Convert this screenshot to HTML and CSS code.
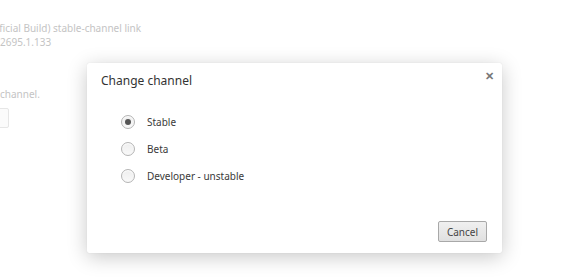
FILE: index.html
```html
<!DOCTYPE html>
<html lang="en">
  <head>
    <meta charset="UTF-8" />
    <title>Change channel</title>
    <link rel="stylesheet" href="styles.css">
  </head>
  <body>
    <div class="page">
      <p class="line line-first">(Official Build) stable-channel link</p>
      <p class="line line-second">2695.1.133</p>
      <p class="line line-channel">channel.</p>
      <div class="page-button"></div>
    </div>

    <div class="dialog">
      <div class="dialog-head">
        <h1>Change channel</h1>
        <span class="close">&#x2715;</span>
      </div>
      <div class="options">
        <label class="option">
          <span class="radio checked"></span>
          <span>Stable</span>
        </label>
        <label class="option">
          <span class="radio"></span>
          <span>Beta</span>
        </label>
        <label class="option">
          <span class="radio"></span>
          <span>Developer - unstable</span>
        </label>
      </div>
      <div class="dialog-foot">
        <button class="btn">Cancel</button>
      </div>
    </div>
  </body>
</html>
```

FILE: styles.css
```css
* {
  margin: 0;
  padding: 0;
  box-sizing: border-box;
}
body {
  font-family: "Noto Sans", "Open Sans", sans-serif;
  background: #fff;
  color: #333;
  width: 580px;
  height: 279px;
  overflow: hidden;
  position: relative;
}
.page {
  padding-top: 21px;
  color: #c4c4c4;
  font-size: 10px;
}
.line {
  line-height: 14px;
}
.line-first {
  margin-left: -15px;
}
.line-channel {
  margin-top: 38px;
}
.page-button {
  margin-top: 7px;
  margin-left: -30px;
  width: 39px;
  height: 20px;
  border: 1px solid #e6e6e6;
  border-radius: 2px;
  background: #fbfbfb;
}
.dialog {
  position: absolute;
  left: 87px;
  top: 63px;
  width: 415px;
  height: 190px;
  background: #fff;
  border-radius: 2px;
  box-shadow: 0 4px 20px rgba(0, 0, 0, 0.22), 0 0 1px rgba(0, 0, 0, 0.15);
  display: flex;
  flex-direction: column;
}
.dialog-head {
  display: flex;
  justify-content: space-between;
  padding: 9px 8px 0 14px;
}
.dialog-head h1 {
  font-size: 12px;
  font-weight: normal;
  color: #333;
  line-height: 18px;
}
.close {
  font-size: 11px;
  font-weight: bold;
  color: #777;
  line-height: 11px;
  margin-top: -2px;
}
.options {
  display: flex;
  flex-direction: column;
  gap: 13px;
  padding: 25px 0 0 34px;
  font-size: 10px;
  color: #3a3a3a;
}
.option {
  display: flex;
  align-items: center;
  gap: 12px;
  line-height: 14px;
}
.radio {
  width: 14px;
  height: 14px;
  border-radius: 50%;
  border: 1px solid #b4b4b4;
  background: linear-gradient(#eeeeee, #f9f9f9);
  box-shadow: inset 0 1px 1px #fff;
  position: relative;
}
.radio.checked::after {
  content: "";
  position: absolute;
  left: 3px;
  top: 3px;
  width: 6px;
  height: 6px;
  border-radius: 50%;
  background: #555;
}
.dialog-foot {
  margin-top: auto;
  display: flex;
  justify-content: flex-end;
  padding: 0 15px 11px 0;
}
.btn {
  font-family: inherit;
  font-size: 10px;
  color: #444;
  width: 49px;
  height: 21px;
  border: 1px solid #a8a8a8;
  border-radius: 2px;
  background: linear-gradient(#f0f0f0, #e0e0e0);
}
```
